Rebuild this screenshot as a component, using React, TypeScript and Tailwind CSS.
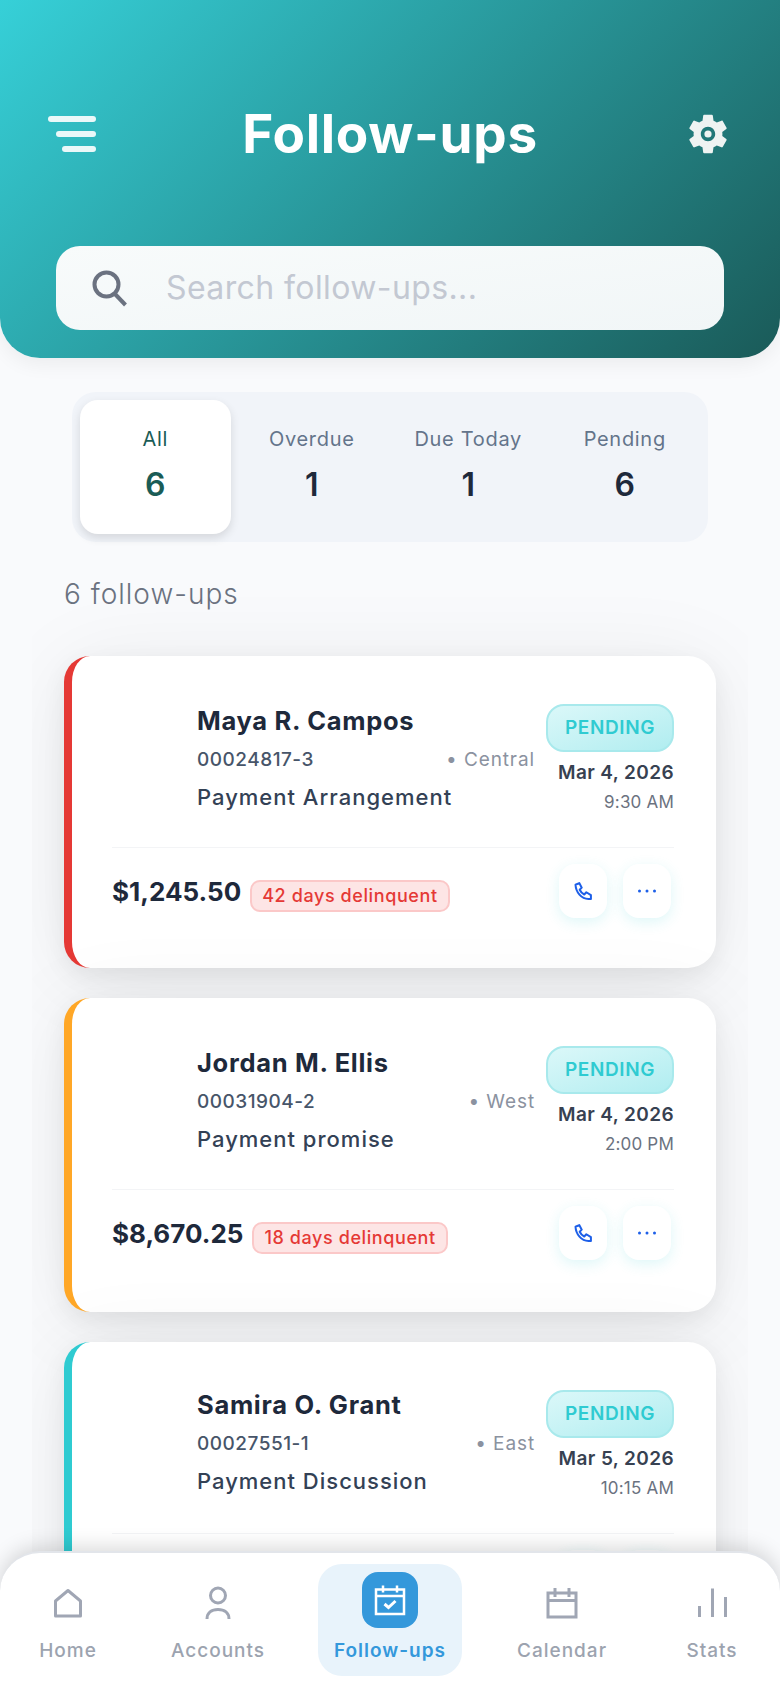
import React from "react";

const font = "font-['Inter','Liberation_Sans',sans-serif]";

function Gear() {
  return (
    <svg width="48" height="48" viewBox="0 0 24 24" fill="#eef3f2">
      <path d="M19.14 12.94c.04-.3.06-.61.06-.94 0-.32-.02-.64-.07-.94l2.03-1.58c.18-.14.23-.41.12-.61l-1.92-3.32c-.12-.22-.37-.29-.59-.22l-2.39.96c-.5-.38-1.03-.7-1.62-.94l-.36-2.54c-.04-.24-.24-.41-.48-.41h-3.84c-.24 0-.43.17-.47.41l-.36 2.54c-.59.24-1.13.57-1.62.94l-2.39-.96c-.22-.08-.47 0-.59.22L2.74 8.87c-.12.21-.08.47.12.61l2.03 1.58c-.05.3-.09.63-.09.94s.02.64.07.94l-2.03 1.58c-.18.14-.23.41-.12.61l1.92 3.32c.12.22.37.29.59.22l2.39-.96c.5.38 1.03.7 1.62.94l.36 2.54c.05.24.24.41.48.41h3.84c.24 0 .44-.17.47-.41l.36-2.54c.59-.24 1.13-.56 1.62-.94l2.39.96c.22.08.47 0 .59-.22l1.92-3.32c.12-.22.07-.47-.12-.61l-2.01-1.58zM12 15.6c-1.98 0-3.6-1.62-3.6-3.6s1.62-3.6 3.6-3.6 3.6 1.62 3.6 3.6-1.62 3.6-3.6 3.6z" />
      <circle cx="12" cy="12" r="1.800" />
    </svg>
  );
}

function Tab({ label, value, active }: { label: string; value: string; active?: boolean }) {
  return (
    <div
      className={
        "flex h-[134px] flex-col items-center rounded-[18px] pt-[24px] " +
        (active ? "bg-white shadow-[0_4px_10px_rgba(0,0,0,0.12)]" : "")
      }
    >
      <span className={"text-[20px] leading-[30px] tracking-[0.7px] " + (active ? "text-[#1a5c56]" : "text-[#64748b]")}>{label}</span>
      <span className={"mt-[9px] text-[32px] font-semibold leading-[44px] " + (active ? "text-[#1a5c56]" : "text-[#1e293b]")}>
        {value}
      </span>
    </div>
  );
}

type Card = {
  name: string;
  acct: string;
  region: string;
  topic: string;
  date: string;
  time: string;
  amount: string;
  days: string;
  border: string;
  pad: string;
  left: string;
};

function PhoneIcon() {
  return (
    <svg width="20" height="20" viewBox="0 0 24 24" fill="none" stroke="#1d5fe8" strokeWidth="2.400" strokeLinejoin="round">
      <path d="M3 4.500 7.500 2.500 10.500 8 8 10.500c1.200 2.600 3.100 4.500 5.500 5.700L16 13.500l5.500 3.500v4.500h-3C10 21.500 3.500 13.500 3 4.500z" />
    </svg>
  );
}

function DotsIcon() {
  return (
    <svg width="20" height="6" viewBox="0 0 20 6" fill="#1d5fe8">
      <circle cx="2.500" cy="3" r="1.500" />
      <circle cx="10" cy="3" r="1.500" />
      <circle cx="17.500" cy="3" r="1.500" />
    </svg>
  );
}

function FollowCard({ c }: { c: Card }) {
  return (
    <div
      className={
        "rounded-l-[26px] rounded-r-[28px] border-l-8 bg-white pl-[40px] pr-[42px] pt-[50px] shadow-[0_8px_24px_rgba(0,0,0,0.07),0_10px_90px_rgba(0,0,0,0.07)] " +
        c.pad +
        " " +
        c.border
      }
    >
      <div className="flex h-[141px] items-start">
        <div className={"ml-[85px] flex min-w-0 flex-1 flex-col " + c.left}>
          <div className="whitespace-nowrap text-[25.500px] font-bold leading-[30px] tracking-[0.7px] text-[#1e293b]">{c.name}</div>
          <div className="mt-[10px] flex items-center justify-between">
            <span className="text-[19px] font-medium leading-[28px] tracking-[0.5px] text-[#475569]">{c.acct}</span>
            <span className="text-[19px] leading-[28px] tracking-[0.9px] text-[#8b92a0]">• {c.region}</span>
          </div>
          <div className="mt-[8px] whitespace-nowrap text-[22px] font-medium leading-[30px] tracking-[1px] text-[#334155]">{c.topic}</div>
        </div>
        <div className="-mt-[2px] ml-[11px] flex flex-col items-end">
          <div className="flex h-[48px] w-[128px] items-center justify-center rounded-[18px] border-2 border-[#a8e9ec] bg-gradient-to-br from-[#dbf8f9] to-[#b0edf0] text-[19px] font-semibold tracking-[0.6px] text-[#2fcbd1]">
            PENDING
          </div>
          <div className="mt-[7px] whitespace-nowrap text-[19px] font-semibold leading-[28px] tracking-[0.4px] text-[#374151]">{c.date}</div>
          <div className="mt-[1px] whitespace-nowrap text-[17px] leading-[28px] tracking-[0.2px] text-[#6b7280]">{c.time}</div>
        </div>
      </div>
      <div className="flex items-center border-t border-[#f3f4f6] pt-[16px]">
        <span className="mt-[2px] text-[26px] font-bold leading-[36px] text-[#1e293b]">{c.amount}</span>
        <span className="ml-[9px] mt-[10px] whitespace-nowrap rounded-[10px] border-2 border-[#fbc8c8] bg-[#fde5e5] px-[10px] text-[18px] font-medium leading-[28px] tracking-[0.6px] text-[#e53935]">
          {c.days}
        </span>
        <div className="ml-auto mr-[3px] flex gap-[16px]">
          <div className="flex h-[54px] w-[48px] items-center justify-center rounded-[16px] bg-white shadow-[0_4px_14px_rgba(47,203,209,0.16)]">
            <PhoneIcon />
          </div>
          <div className="flex h-[54px] w-[48px] items-center justify-center rounded-[16px] bg-white shadow-[0_4px_14px_rgba(47,203,209,0.16)]">
            <DotsIcon />
          </div>
        </div>
      </div>
    </div>
  );
}

const cards: Card[] = [
  { name: "Maya R. Campos", acct: "00024817-3", region: "Central", topic: "Payment Arrangement", date: "Mar 4, 2026", time: "9:30 AM", amount: "$1,245.50", days: "42 days delinquent", border: "border-[#e53935]", pad: "pb-[50px]", left: "" },
  { name: "Jordan M. Ellis", acct: "00031904-2", region: "West", topic: "Payment promise", date: "Mar 4, 2026", time: "2:00 PM", amount: "$8,670.25", days: "18 days delinquent", border: "border-[#ffa726]", pad: "pb-[52px]", left: "" },
  { name: "Samira O. Grant", acct: "00027551-1", region: "East", topic: "Payment Discussion", date: "Mar 5, 2026", time: "10:15 AM", amount: "$3,410.00", days: "7 days delinquent", border: "border-[#2fcbd1]", pad: "pb-[50px]", left: "-mt-[2px]" },
];

function NavIcon({ kind }: { kind: string }) {
  const p = { width: 36, height: 36, viewBox: "0 0 36 36", fill: "none", stroke: "#a0a6b4", strokeWidth: 3 };
  if (kind === "home")
    return (
      <svg {...p} strokeLinejoin="round">
        <path d="M18 5.500 30.500 16v15h-25V16z" />
      </svg>
    );
  if (kind === "user")
    return (
      <svg {...p}>
        <circle cx="18" cy="10.500" r="7.500" />
        <path d="M7 34c0-6 4.500-9.500 11-9.500S29 28 29 34" />
      </svg>
    );
  if (kind === "cal")
    return (
      <svg {...p}>
        <path d="M4 8h28v24H4zM4 15.500h28M11 3v9M25 3v9" />
      </svg>
    );
  return (
    <svg {...p}>
      <path d="M5.500 32V21M18.500 32V3.500M31.500 32V12" />
    </svg>
  );
}

function NavItem({ icon, label }: { icon: string; label: string }) {
  return (
    <div className="flex flex-col items-center pt-[32px]">
      <NavIcon kind={icon} />
      <span className="mt-[15px] text-[19px] font-medium leading-[30px] tracking-[1px] text-[#9ca3af]">{label}</span>
    </div>
  );
}

export default function App() {
  return (
    <div className={"relative h-[1688px] w-[780px] overflow-hidden bg-[#f9fafc] " + font}>
      <header className="relative z-10 flex h-[358px] flex-col rounded-b-[40px] bg-[linear-gradient(135deg,#36d0d8,#1a5a58)] px-[48px] pt-[112px] shadow-[0_6px_20px_rgba(0,0,0,0.06)]">
        <div className="flex h-[44px] items-center justify-between">
          <div className="flex w-[48px] flex-col items-end gap-[9px]">
            <span className="h-[6px] w-[48px] rounded-full bg-white/90" />
            <span className="h-[6px] w-[40px] rounded-full bg-white/90" />
            <span className="h-[6px] w-[34px] rounded-full bg-white/90" />
          </div>
          <h1 className="text-[53px] font-bold leading-none tracking-[0.7px] text-white">Follow-ups</h1>
          <Gear />
        </div>
        <div className="mx-[8px] mt-[90px] flex h-[84px] items-center rounded-[24px] bg-gradient-to-br from-[#f8fbfb] to-[#f1f6f7] px-[35px]">
          <svg width="38" height="38" viewBox="0 0 38 38" fill="none" stroke="#6b7280" strokeWidth="4">
            <circle cx="15.500" cy="15.500" r="12" />
            <path d="m24 25 10.500 11" />
          </svg>
          <span className="ml-[37px] text-[32px] font-normal tracking-[0.4px] text-[#c3c8d2]">Search follow-ups...</span>
        </div>
      </header>

      <main className="flex flex-col">
        <div className="mx-[72px] mt-[34px] grid h-[150px] grid-cols-4 gap-[6px] rounded-[24px] bg-[#f1f4f9] p-[8px]">
          <Tab label="All" value="6" active />
          <Tab label="Overdue" value="1" />
          <Tab label="Due Today" value="1" />
          <Tab label="Pending" value="6" />
        </div>
        <div className="mx-[32px] mt-[32px] h-[1200px] overflow-hidden px-[32px]">
          <div className="pt-[1px] text-[28px] font-light leading-[38px] tracking-[1px] text-[#6b7280]">6 follow-ups</div>
          <div className="mt-[43px] flex flex-col gap-[30px]">
            {cards.map((c) => (
              <FollowCard key={c.acct} c={c} />
            ))}
          </div>
        </div>
      </main>

      <nav className="absolute inset-x-0 bottom-0 z-20 grid h-[137px] grid-cols-[136px_164px_180px_164px_136px] rounded-t-[40px] border-t-2 border-[#e2e5ea] bg-white shadow-[0_-4px_20px_rgba(0,0,0,0.15)]">
        <NavItem icon="home" label="Home" />
        <NavItem icon="user" label="Accounts" />
        <div className="mx-auto mt-[11px] flex h-[112px] w-[144px] flex-col items-center rounded-[24px] bg-[#e8f3fb] pt-[8px]">
          <div className="flex h-[56px] w-[56px] items-center justify-center rounded-[16px] bg-[#3498db]">
            <svg width="34" height="34" viewBox="0 0 34 34" fill="none" stroke="#fff" strokeWidth="2.500">
              <path d="M3 6.500h28v24.500h-28zM3 13h28M10 2.500v7M24 2.500v7" />
              <path d="m11.500 21 4 3.500 7-6.500" strokeWidth="3" />
            </svg>
          </div>
          <span className="mt-[8px] whitespace-nowrap text-[19px] font-semibold leading-[30px] tracking-[1px] text-[#3498db]">Follow-ups</span>
        </div>
        <NavItem icon="cal" label="Calendar" />
        <NavItem icon="bars" label="Stats" />
      </nav>
    </div>
  );
}
